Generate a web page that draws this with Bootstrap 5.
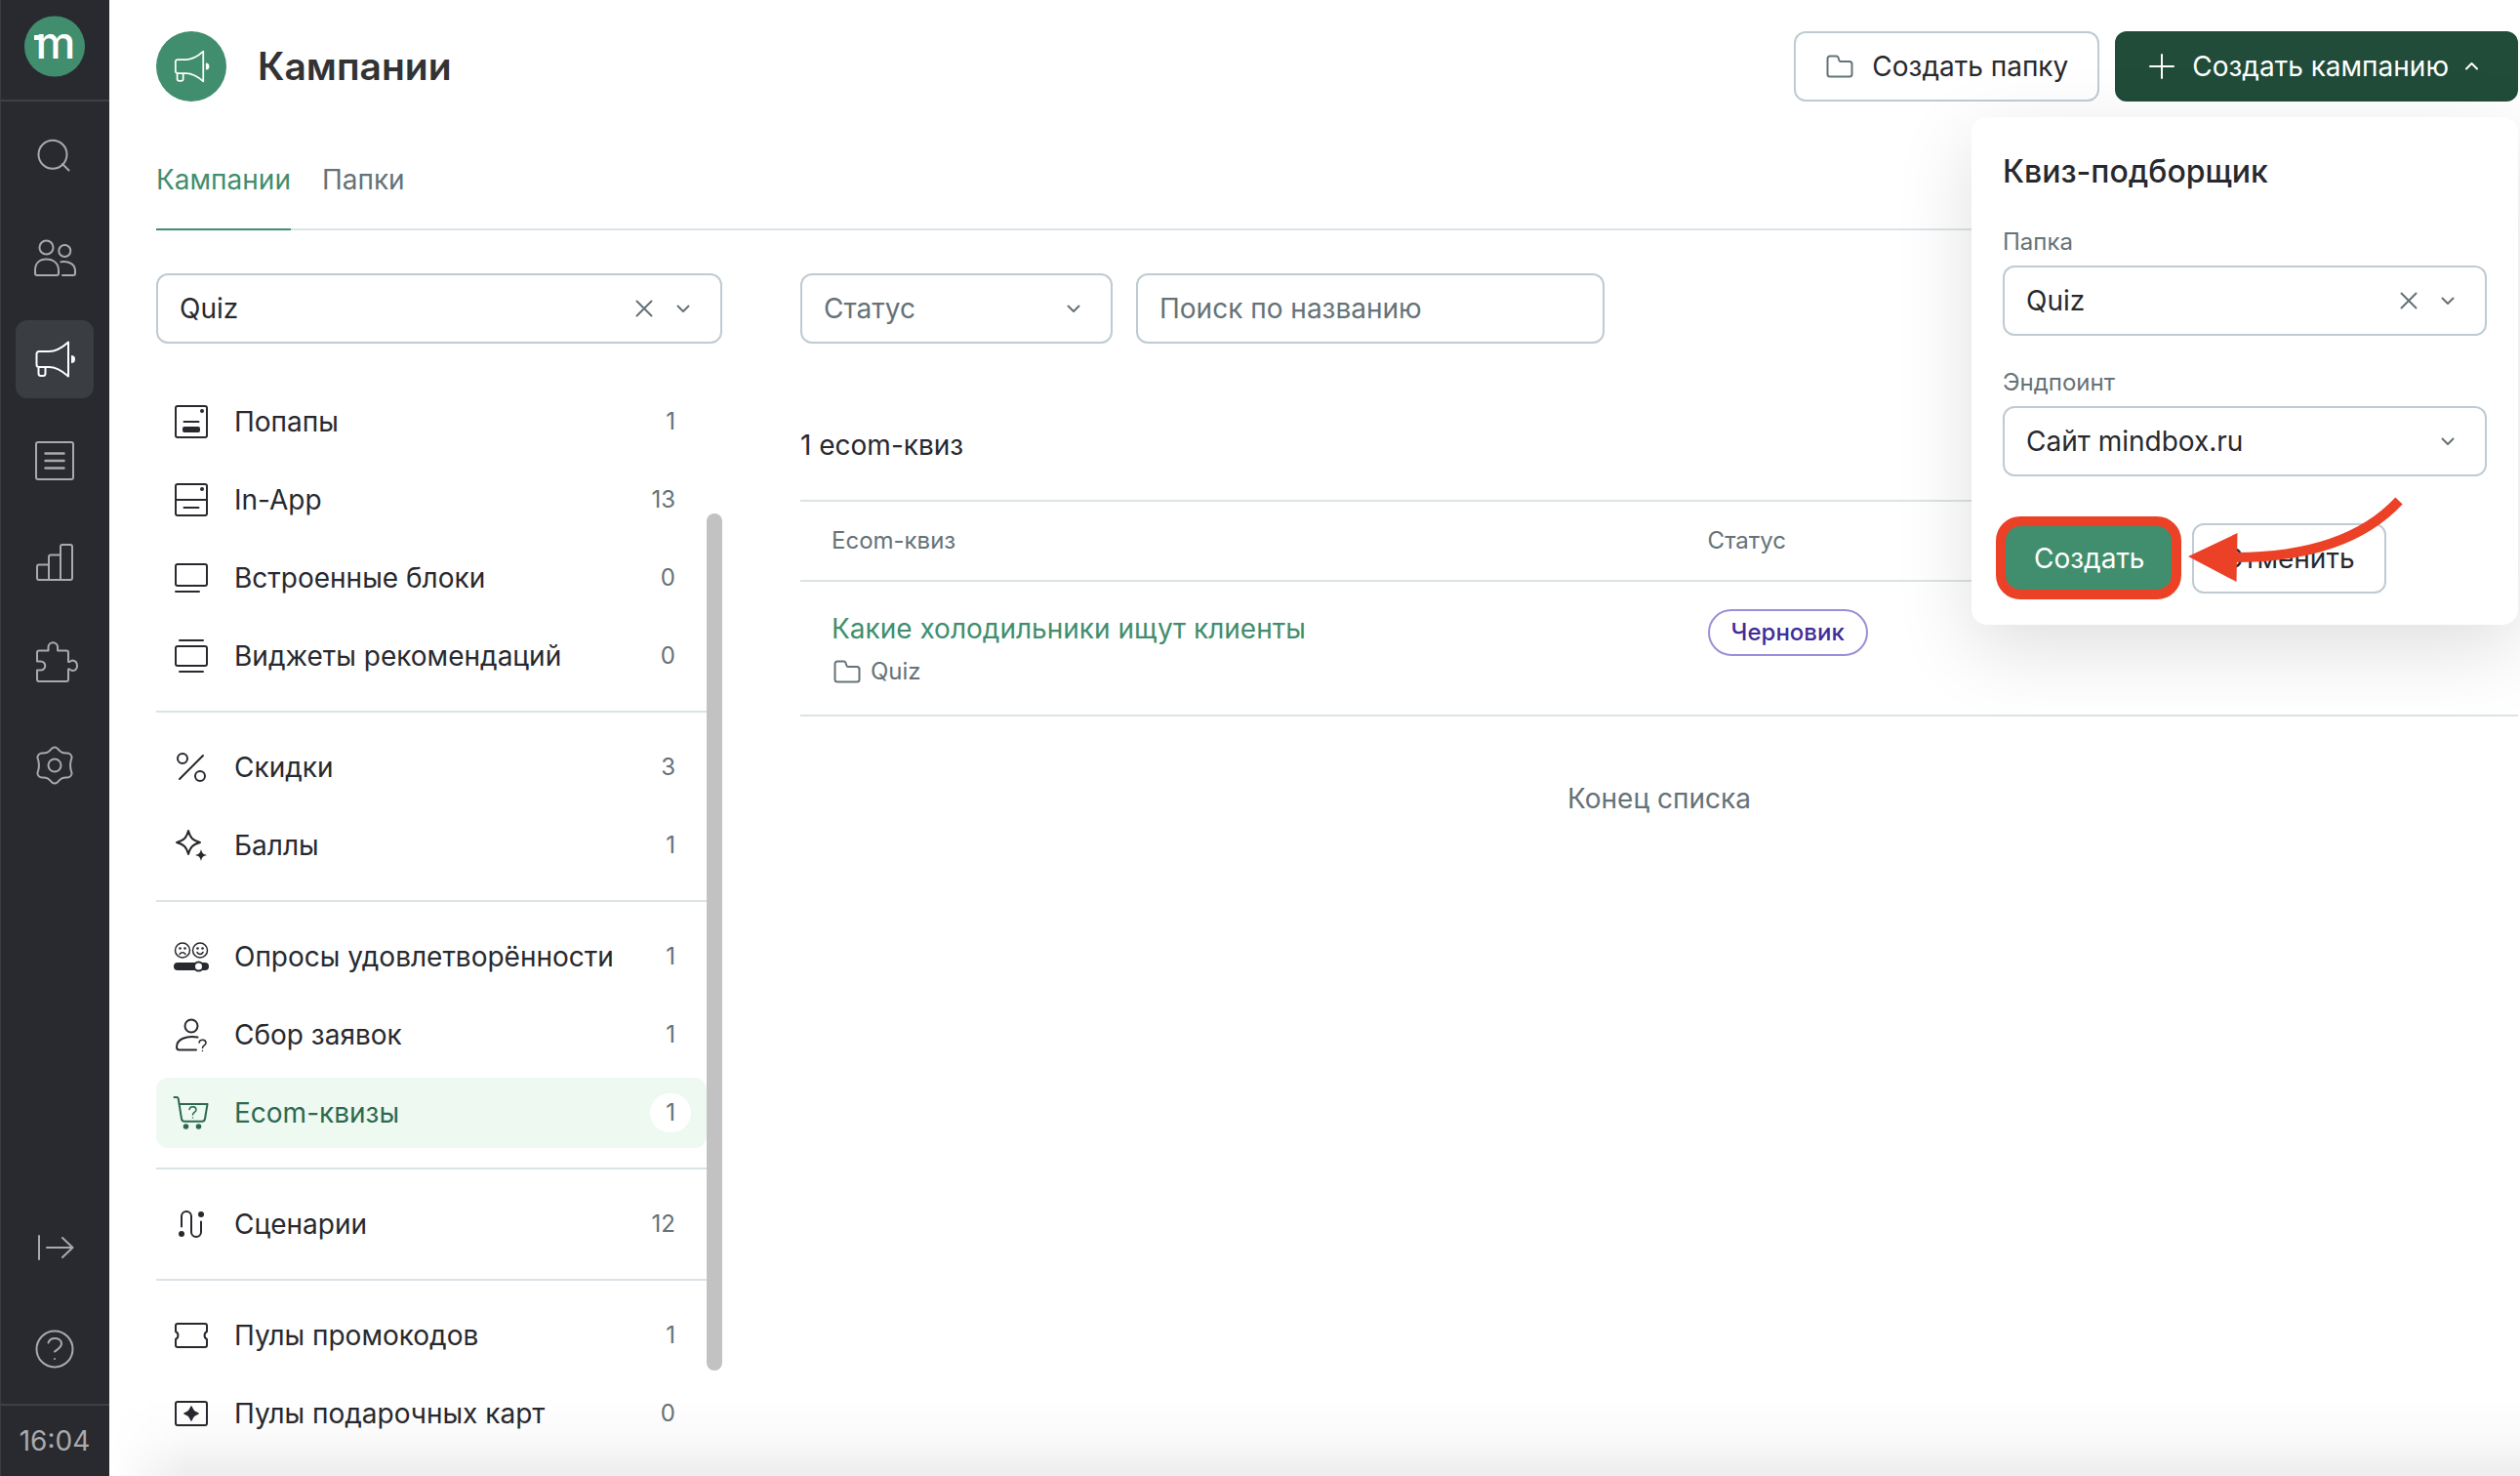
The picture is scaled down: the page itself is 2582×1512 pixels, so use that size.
<!DOCTYPE html>
<html lang="ru">
<head>
<meta charset="utf-8">
<meta name="viewport" content="width=device-width, initial-scale=1">
<title>Кампании</title>
<link rel="stylesheet" href="https://cdn.jsdelivr.net/npm/bootstrap@5.3.0/dist/css/bootstrap.min.css">
<style>
:root{--ink:#28292e;--muted-ink:#657278;--green:#418e6e;--green-dark:#204c39;--line:#dbe3e6;--field-line:#bfcbd3;--rail:#292a2f}
body{font-family:Inter,"Liberation Sans",sans-serif;font-size:28px;line-height:40px;color:var(--ink);background:#fff}
a{text-decoration:none}
svg{flex:none;display:block}
.ico{fill:none;stroke:currentColor;stroke-width:2;stroke-linecap:round;stroke-linejoin:round}
.ico .solid{fill:currentColor;stroke:none}

.rail{width:112px;background:var(--rail);color:#a9aaac;box-shadow:inset 1px 0 #3b3c40}
.rail-logo{height:104px;border-bottom:2px solid #3f4044;padding-top:16px}
.rail-nav{gap:24px;padding:16px 0}
.rail-item{width:80px;height:80px;border-radius:12px;color:inherit}
.rail-item.active{background:#3a3d41;color:#fff}
.rail-time{height:74px;border-top:2px solid #3f4044}

.workspace{padding:32px 2px 0 48px;min-width:0}
.head-mark{width:72px;height:72px;background:var(--green);color:#fff}
.head-title{font-size:39px;line-height:48px;font-weight:600;color:#333;margin-left:32px}
.act{--bs-btn-font-size:28px;--bs-btn-line-height:40px;--bs-btn-border-radius:12px;--bs-btn-border-width:2px;--bs-btn-padding-x:30px;--bs-btn-padding-y:14px;height:72px;white-space:nowrap}
.act-line{--bs-btn-color:var(--ink);--bs-btn-border-color:var(--field-line);--bs-btn-bg:#fff;--bs-btn-hover-border-color:var(--green)}
.act-main{--bs-btn-color:#fff;--bs-btn-bg:var(--green);--bs-btn-border-color:var(--green);--bs-btn-hover-bg:var(--green-dark);--bs-btn-hover-color:#fff}
.act-dark{--bs-btn-color:#fff;--bs-btn-bg:var(--green-dark);--bs-btn-border-color:var(--green-dark);--bs-btn-hover-bg:var(--green);--bs-btn-hover-color:#fff}
.act-icon{gap:18px}
.act-dark.act-icon{gap:15px}
.act-folder-ico{color:var(--muted-ink)}

.tabs{margin-top:60px;gap:32px;border-bottom:2px solid var(--line)}
.tabs .nav-link{padding:0 0 30px;margin-bottom:-2px;border-bottom:2px solid transparent;color:var(--muted-ink)}
.tabs .nav-link.active{color:var(--green);border-color:var(--green)}
.columns{gap:80px;padding-top:44px}
.side{width:580px;flex:none}

.field{height:72px;border:2px solid var(--field-line);border-radius:12px;font-size:28px;line-height:40px;padding:0 22px;color:var(--ink)}
.field::placeholder{color:var(--muted-ink);opacity:1}
.form-select.field{padding-right:100px;background-size:20px 20px;background-position:right 28px center;--bs-form-select-bg-img:url("data:image/svg+xml,%3csvg xmlns='http://www.w3.org/2000/svg' viewBox='0 0 20 20'%3e%3cpath fill='none' stroke='%23657278' stroke-width='2' stroke-linecap='round' stroke-linejoin='round' d='M4.500 7.500l5.500 5.500 5.500-5.500'/%3e%3c/svg%3e")}
.field.unset{color:var(--muted-ink)}
.field-status{width:320px;flex:none}
.field-search{width:480px}
.clear{position:absolute;right:68px;top:24px;width:24px;height:24px;color:var(--muted-ink)}

.kinds{padding-top:44px}
.kind{height:72px;border-radius:12px;padding:0 16px;color:var(--ink)}
.kind+.kind{margin-top:8px}
.kind.active{background:#eef9f2;color:#2c6a50}
.kind-name{margin-left:24px}
.kind-count{font-size:24px;line-height:40px;padding:0 16px;border-radius:20px;color:var(--muted-ink)}
.kind.active .kind-count{background:#fff}
.kind-group+.kind-group{border-top:2px solid var(--line);margin-top:20px;padding-top:20px}
.thumb{width:16px;border-radius:8px;background:#c2c2c2;margin:174px 0 108px}

.total{margin:84px 0 36px}
.grid-table{table-layout:fixed;margin:0;border-top:2px solid var(--line);--bs-table-color:var(--ink)}
.grid-table th{height:82px;padding:0 32px;font-size:24px;line-height:32px;font-weight:400;color:var(--muted-ink);vertical-align:middle;border-bottom:2px solid var(--line)}
.grid-table .col-quiz{width:51%}
.grid-table td{padding:28px 32px;border-bottom:2px solid var(--line)}
.quiz-link{color:var(--green)}
.quiz-folder{gap:8px;margin-top:8px;font-size:24px;line-height:32px;color:var(--muted-ink)}
.state{height:48px;border:2px solid #9a8fd9;border-radius:24px;padding:0 22px;font-size:24px;line-height:44px;font-weight:500;color:#3f2d98}
.list-end{margin-top:64px;color:var(--muted-ink)}

.maker{right:0;width:560px;margin-top:16px;padding:32px;border:0;border-radius:16px;box-shadow:0 24px 80px rgba(0,0,0,.13);font-size:28px;color:var(--ink)}
.maker-title{font-size:32px;line-height:48px;font-weight:500;margin-bottom:32px}
.maker-label{font-size:24px;line-height:32px;margin-bottom:8px;color:var(--muted-ink)}
.maker-row{margin-bottom:32px}
.maker-actions{gap:16px;padding-top:16px}
.pointer-art{position:absolute;left:0;top:0;pointer-events:none}
.bottom-haze{position:absolute;left:112px;right:0;bottom:0;height:80px;pointer-events:none;background:linear-gradient(to bottom,rgba(0,0,0,0),rgba(0,0,0,.02) 50%,rgba(0,0,0,.07));-webkit-mask-image:linear-gradient(to right,transparent,#000 80px);mask-image:linear-gradient(to right,transparent,#000 80px)}
</style>
<script src="https://cdn.jsdelivr.net/npm/bootstrap@5.3.0/dist/js/bootstrap.bundle.min.js"></script>
</head>
<body>
<svg width="0" height="0" class="position-absolute" aria-hidden="true">
  <symbol id="i-horn" viewBox="0 0 48 48">
    <path d="M8 16h10c8 0 15-5 20-9.500v35c-5-4.500-12-9.500-20-9.500H8a2.500 2.500 0 0 1-2.500-2.500v-11A2.500 2.500 0 0 1 8 16zM7.500 32v6.500a2.500 2.500 0 0 0 2.500 2.500h2a2.500 2.500 0 0 0 2.500-2.500V32"/>
    <path class="solid" d="M41 20a4 4 0 0 1 0 8z" fill="currentColor" stroke="none"/>
  </symbol>
  <symbol id="i-folder" viewBox="0 0 28 28">
    <path d="M4 3.500h6.500c1 0 1.700.6 2 1.500l1 3c.2.600.7 1 1.300 1H24a2.500 2.500 0 0 1 2.500 2.500V22a2.500 2.500 0 0 1-2.500 2.500H4A2.500 2.500 0 0 1 1.500 22V6A2.500 2.500 0 0 1 4 3.500z"/>
  </symbol>
  <symbol id="i-x" viewBox="0 0 24 24"><path d="M4.500 4.500l15 15M19.500 4.500l-15 15"/></symbol>
</svg>

<div class="d-flex min-vh-100 position-relative">
  <nav class="rail d-flex flex-column flex-shrink-0" aria-label="Разделы">
    <a href="#" class="rail-logo d-flex justify-content-center" aria-label="Mindbox">
      <svg width="64" height="64" viewBox="0 0 64 64"><circle cx="32" cy="31.500" r="31" fill="#418e6e"/><text x="33" y="44" text-anchor="middle" font-family="Inter, sans-serif" font-weight="500" font-size="46" fill="#fff">m</text><path d="M11 20h6v5h-6z" fill="#fff"/></svg>
    </a>
    <div class="rail-nav d-flex flex-column align-items-center">
      <a href="#" class="rail-item d-flex align-items-center justify-content-center" aria-label="Поиск"><svg class="ico" width="48" height="48" viewBox="0 0 48 48"><circle cx="22" cy="22.300" r="14.500"/><path d="M32 32l6.500 6.500"/></svg></a>
      <a href="#" class="rail-item d-flex align-items-center justify-content-center" aria-label="Клиенты"><svg class="ico" width="48" height="48" viewBox="0 0 48 48"><circle cx="15.500" cy="13.500" r="7"/><circle cx="34.300" cy="17" r="6"/><path d="M6 42h20a2 2 0 0 0 2-2v-3c0-7-5-11.500-12.500-11.500S4 30 4 37v3a2 2 0 0 0 2 2zM30.500 28.300c8-1.300 14.500 2.200 14.500 9.200V40a2 2 0 0 1-2 2H32"/></svg></a>
      <a href="#" class="rail-item active d-flex align-items-center justify-content-center" aria-label="Кампании"><svg class="ico" width="48" height="48"><use href="#i-horn"/></svg></a>
      <a href="#" class="rail-item d-flex align-items-center justify-content-center" aria-label="Списки"><svg class="ico" width="48" height="48" viewBox="0 0 48 48"><rect x="5" y="5" width="38" height="38" rx="2"/><path d="M14.500 16.500h19M14.500 24h19M14.500 31.500h19" stroke-width="2.500"/></svg></a>
      <a href="#" class="rail-item d-flex align-items-center justify-content-center" aria-label="Отчёты"><svg class="ico" width="48" height="48" viewBox="0 0 48 48"><path d="M18 42H8a2 2 0 0 1-2-2V28.500a2 2 0 0 1 2-2h10M30 42H18V18.500a2 2 0 0 1 2-2h10M30 42V8a2 2 0 0 1 2-2h8a2 2 0 0 1 2 2v32a2 2 0 0 1-2 2z"/></svg></a>
      <a href="#" class="rail-item d-flex align-items-center justify-content-center" aria-label="Интеграции"><svg class="ico" width="48" height="48" viewBox="0 0 48 48"><path d="M8 10.500h9.500V7a4.800 4.800 0 0 1 9.600 0v3.500H36a2 2 0 0 1 2 2V22h1.500c.8-1 2-1.500 3-1.500 6 1 6 10 0 10.500-1 0-2.200-.5-3-1.500H38V40a2 2 0 0 1-2 2H8a2 2 0 0 1-2-2V30.500h3c7 .5 7-9.500 0-9H6v-9a2 2 0 0 1 2-2z"/></svg></a>
      <a href="#" class="rail-item d-flex align-items-center justify-content-center" aria-label="Настройки"><svg class="ico" width="48" height="48" viewBox="0 0 48 48"><circle cx="24" cy="24" r="6.500"/><path d="M21 6.800c1.800-1.500 4.200-1.500 6 0 3.200 3.600 5 5 10 4.600 2.500.2 4.500 2.300 4.600 4.600-2.300 6-2.300 10 0 16-.1 2.300-2.100 4.400-4.600 4.600-5-.4-6.800 1-10 4.600-1.800 1.500-4.200 1.500-6 0-3.200-3.600-5-5-10-4.600-2.500-.2-4.500-2.300-4.600-4.600 2.300-6 2.300-10 0-16 .1-2.300 2.100-4.400 4.600-4.600 5 .4 6.800-1 10-4.600z"/></svg></a>
    </div>
    <div class="rail-nav d-flex flex-column align-items-center mt-auto">
      <a href="#" class="rail-item d-flex align-items-center justify-content-center" aria-label="Развернуть меню"><svg class="ico" width="48" height="48" viewBox="0 0 48 48"><path d="M8 12v24M16 24h26M32 14l10.500 10L32 34"/></svg></a>
      <a href="#" class="rail-item d-flex align-items-center justify-content-center" aria-label="Помощь"><svg class="ico" width="48" height="48" viewBox="0 0 48 48"><circle cx="24" cy="24" r="18.500"/><path d="M17.500 17.500c2-6.500 13.500-6 13.500 1 0 4-4 5.500-7 8M24 34v.1"/></svg></a>
    </div>
    <time class="rail-time d-flex align-items-center justify-content-center">16:04</time>
  </nav>

  <main class="workspace d-flex flex-column flex-grow-1">
    <header class="d-flex align-items-center">
      <span class="head-mark rounded-circle d-flex align-items-center justify-content-center"><svg class="ico" width="42" height="42"><use href="#i-horn"/></svg></span>
      <h1 class="head-title mb-0 me-auto">Кампании</h1>
      <div class="d-flex gap-3">
        <button type="button" class="btn act act-line act-icon d-flex align-items-center"><svg class="ico act-folder-ico" width="30" height="28"><use href="#i-folder"/></svg>Создать папку</button>
        <div class="dropdown">
          <button type="button" class="btn act act-dark act-icon d-flex align-items-center" aria-expanded="true">
            <svg class="ico" width="32" height="32" viewBox="0 0 32 32"><path d="M16 4v24M4 16h24"/></svg>Создать кампанию<svg class="ico" width="24" height="24" viewBox="0 0 24 24"><path d="M3 14.500l5.500-5.500 5.500 5.500"/></svg>
          </button>
          <form class="dropdown-menu show maker">
            <h2 class="maker-title">Квиз-подборщик</h2>
            <div class="maker-row">
              <label class="maker-label d-block" for="mkFolder">Папка</label>
              <div class="position-relative">
                <select id="mkFolder" class="form-select field"><option>Quiz</option></select>
                <button type="button" class="clear btn p-0 border-0" aria-label="Очистить"><svg class="ico" width="24" height="24"><use href="#i-x"/></svg></button>
              </div>
            </div>
            <div class="maker-row">
              <label class="maker-label d-block" for="mkPoint">Эндпоинт</label>
              <select id="mkPoint" class="form-select field"><option>Сайт mindbox.ru</option></select>
            </div>
            <div class="maker-actions d-flex">
              <button type="button" class="btn act act-main">Создать</button>
              <button type="button" class="btn act act-line">Отменить</button>
            </div>
            <svg class="pointer-art" width="560" height="520" viewBox="0 0 560 520" aria-hidden="true">
              <rect x="30" y="414" width="180" height="75" rx="20" fill="none" stroke="#eb4126" stroke-width="10"/>
              <path d="M270 451Q384 451 438 393" fill="none" stroke="#eb4126" stroke-width="10"/>
              <path d="M222 450l50.500-24-1 50z" fill="#eb4126"/>
            </svg>
          </form>
        </div>
      </div>
    </header>

    <nav class="tabs nav">
      <a class="nav-link active" href="#">Кампании</a>
      <a class="nav-link" href="#">Папки</a>
    </nav>

    <div class="columns d-flex flex-grow-1">
      <aside class="side d-flex flex-column">
        <div class="position-relative">
          <select class="form-select field" aria-label="Папка"><option>Quiz</option></select>
          <button type="button" class="clear btn p-0 border-0" aria-label="Очистить"><svg class="ico" width="24" height="24"><use href="#i-x"/></svg></button>
        </div>
        <div class="d-flex flex-grow-1">
          <div class="kinds flex-grow-1">
            <div class="kind-group">
              <a href="#" class="kind d-flex align-items-center"><svg class="ico" width="40" height="40" viewBox="0 0 40 40"><rect x="4" y="4" width="32" height="32" rx="2"/><path d="M12.500 20h15"/><circle class="solid" cx="31" cy="9" r="2"/><rect class="solid" x="11" y="25" width="18" height="6" rx="2"/></svg><span class="kind-name me-auto">Попапы</span><span class="kind-count">1</span></a>
              <a href="#" class="kind d-flex align-items-center"><svg class="ico" width="40" height="40" viewBox="0 0 40 40"><rect x="4" y="4" width="32" height="32" rx="2"/><path d="M4 20h32M12.500 28h15"/><circle class="solid" cx="31" cy="9" r="2"/></svg><span class="kind-name me-auto">In-App</span><span class="kind-count">13</span></a>
              <a href="#" class="kind d-flex align-items-center"><svg class="ico" width="40" height="40" viewBox="0 0 40 40"><rect x="4" y="6" width="32" height="22" rx="2"/><path d="M4 34h24"/></svg><span class="kind-name me-auto">Встроенные блоки</span><span class="kind-count">0</span></a>
              <a href="#" class="kind d-flex align-items-center"><svg class="ico" width="40" height="40" viewBox="0 0 40 40"><rect x="4" y="10" width="32" height="20" rx="2"/><path d="M8 4h24M8 36h24"/></svg><span class="kind-name me-auto">Виджеты рекомендаций</span><span class="kind-count">0</span></a>
            </div>
            <div class="kind-group">
              <a href="#" class="kind d-flex align-items-center"><svg class="ico" width="40" height="40" viewBox="0 0 40 40"><circle cx="11" cy="11" r="5"/><circle cx="29" cy="29" r="5"/><path d="M8 32L32 8"/></svg><span class="kind-name me-auto">Скидки</span><span class="kind-count">3</span></a>
              <a href="#" class="kind d-flex align-items-center"><svg class="ico" width="40" height="40" viewBox="0 0 40 40"><path d="M17 5c2 7.500 4.500 10 12 12-7.500 2-10 4.500-12 12-2-7.500-4.500-10-12-12 7.500-2 10-4.500 12-12z"/><path class="solid" d="M30 24c1.200 4.200 1.800 4.800 6 6-4.200 1.200-4.800 1.800-6 6-1.200-4.200-1.800-4.800-6-6 4.200-1.200 4.800-1.800 6-6z"/></svg><span class="kind-name me-auto">Баллы</span><span class="kind-count">1</span></a>
            </div>
            <div class="kind-group">
              <a href="#" class="kind d-flex align-items-center"><svg class="ico" width="40" height="40" viewBox="0 0 40 40"><g stroke-width="1.500"><circle cx="11" cy="13.500" r="7.500"/><circle cx="29" cy="13.500" r="7.500"/><path d="M8 17.500c1.500-2.200 4.500-2.200 6 0M26 15.500c1.500 2.500 4.500 2.500 6 0"/></g><g class="solid"><circle cx="8.500" cy="11.500" r="1.300"/><circle cx="13.500" cy="11.500" r="1.300"/><circle cx="26.500" cy="11.500" r="1.300"/><circle cx="31.500" cy="11.500" r="1.300"/><rect x="2" y="26" width="36" height="8" rx="4"/></g><circle cx="27.500" cy="30" r="4.500" fill="#fff"/></svg><span class="kind-name me-auto">Опросы удовлетворённости</span><span class="kind-count">1</span></a>
              <a href="#" class="kind d-flex align-items-center"><svg class="ico" width="40" height="40" viewBox="0 0 40 40"><circle cx="20" cy="11" r="6.500"/><path d="M26.500 22.500C15 20.500 5 24.500 5 32.500c0 2 .8 3 2.500 3H25"/><path d="M28 28c.8-4 7-3.500 7 .4 0 2.300-3.500 2.600-3.500 5M31.500 36.500v.1" stroke-width="1.500"/></svg><span class="kind-name me-auto">Сбор заявок</span><span class="kind-count">1</span></a>
              <a href="#" class="kind active d-flex align-items-center"><svg class="ico" width="40" height="40" viewBox="0 0 40 40"><path d="M2.500 4H5c1 0 1.500.5 1.700 1.500L10 26c.3 1.800 1.200 2.700 3 2.700h18c1.800 0 2.700-.9 3-2.700L36.500 11H7.500"/><circle class="solid" cx="14.500" cy="34" r="2.800"/><circle class="solid" cx="27.500" cy="34" r="2.800"/><path d="M18 16.500c.8-4 7-3.500 7 .4 0 2.300-3.500 2.600-3.500 5M21.500 25v.1" stroke-width="1.500"/></svg><span class="kind-name me-auto">Ecom-квизы</span><span class="kind-count">1</span></a>
            </div>
            <div class="kind-group">
              <a href="#" class="kind d-flex align-items-center"><svg class="ico" width="40" height="40" viewBox="0 0 40 40"><path d="M10 22.500V12a5 5 0 0 1 10 0v16a5 5 0 0 0 10 0V17.500"/><circle class="solid" cx="10" cy="30" r="3"/><circle class="solid" cx="30" cy="10" r="3"/></svg><span class="kind-name me-auto">Сценарии</span><span class="kind-count">12</span></a>
            </div>
            <div class="kind-group">
              <a href="#" class="kind d-flex align-items-center"><svg class="ico" width="40" height="40" viewBox="0 0 40 40"><path d="M6 8h28a2 2 0 0 1 2 2v6a4.500 4.500 0 0 0 0 8v6a2 2 0 0 1-2 2H6a2 2 0 0 1-2-2v-6a4.500 4.500 0 0 0 0-8v-6a2 2 0 0 1 2-2z"/></svg><span class="kind-name me-auto">Пулы промокодов</span><span class="kind-count">1</span></a>
              <a href="#" class="kind d-flex align-items-center"><svg class="ico" width="40" height="40" viewBox="0 0 40 40"><rect x="4" y="8" width="32" height="24" rx="2"/><path d="M20 13c2 4.500 2.500 5 7 7-4.500 2-5 2.500-7 7-2-4.500-2.500-5-7-7 4.500-2 5-2.500 7-7z" fill="currentColor" stroke-width="1.500"/></svg><span class="kind-name me-auto">Пулы подарочных карт</span><span class="kind-count">0</span></a>
            </div>
          </div>
          <div class="thumb flex-shrink-0"></div>
        </div>
      </aside>

      <section class="flex-grow-1">
        <div class="d-flex gap-4">
          <select class="form-select field field-status unset" aria-label="Статус"><option>Статус</option></select>
          <input type="text" class="form-control field field-search" placeholder="Поиск по названию" aria-label="Поиск по названию">
        </div>
        <p class="total">1 ecom-квиз</p>
        <table class="table grid-table">
          <thead><tr><th scope="col" class="col-quiz">Ecom-квиз</th><th scope="col">Статус</th></tr></thead>
          <tbody><tr>
            <td><a href="#" class="quiz-link">Какие холодильники ищут клиенты</a>
              <div class="quiz-folder d-flex align-items-center"><svg class="ico" width="32" height="28"><use href="#i-folder"/></svg>Quiz</div></td>
            <td><span class="state d-inline-block align-top">Черновик</span></td>
          </tr></tbody>
        </table>
        <p class="list-end text-center mb-0">Конец списка</p>
      </section>
    </div>
  </main>
  <div class="bottom-haze"></div>
</div>
</body>
</html>
